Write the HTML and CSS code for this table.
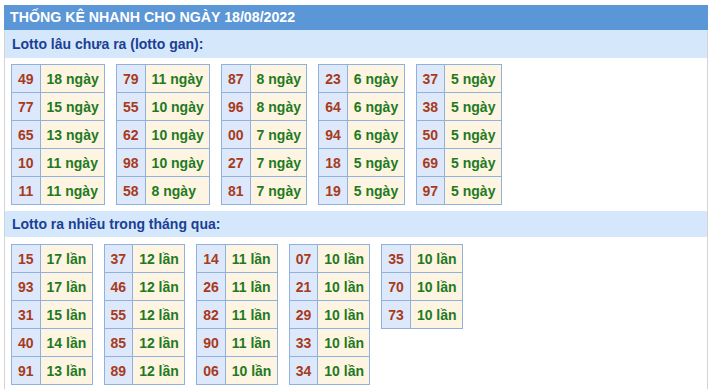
FILE: index.html
```html
<!DOCTYPE html>
<html lang="vi">
<head>
<meta charset="utf-8">
<link rel="stylesheet" href="styles.css">
</head>
<body>
<div class="box">
  <div class="title">THỐNG KÊ NHANH CHO NGÀY 18/08/2022</div>
  <div class="sub">Lotto lâu chưa ra (lotto gan):</div>
  <div class="tables">
    <table class="t"><tr><td class="n">49</td><td class="v">18 ngày</td></tr><tr><td class="n">77</td><td class="v">15 ngày</td></tr><tr><td class="n">65</td><td class="v">13 ngày</td></tr><tr><td class="n">10</td><td class="v">11 ngày</td></tr><tr><td class="n">11</td><td class="v">11 ngày</td></tr></table>
    <table class="t"><tr><td class="n">79</td><td class="v">11 ngày</td></tr><tr><td class="n">55</td><td class="v">10 ngày</td></tr><tr><td class="n">62</td><td class="v">10 ngày</td></tr><tr><td class="n">98</td><td class="v">10 ngày</td></tr><tr><td class="n">58</td><td class="v">8 ngày</td></tr></table>
    <table class="t"><tr><td class="n">87</td><td class="v">8 ngày</td></tr><tr><td class="n">96</td><td class="v">8 ngày</td></tr><tr><td class="n">00</td><td class="v">7 ngày</td></tr><tr><td class="n">27</td><td class="v">7 ngày</td></tr><tr><td class="n">81</td><td class="v">7 ngày</td></tr></table>
    <table class="t"><tr><td class="n">23</td><td class="v">6 ngày</td></tr><tr><td class="n">64</td><td class="v">6 ngày</td></tr><tr><td class="n">94</td><td class="v">6 ngày</td></tr><tr><td class="n">18</td><td class="v">5 ngày</td></tr><tr><td class="n">19</td><td class="v">5 ngày</td></tr></table>
    <table class="t"><tr><td class="n">37</td><td class="v">5 ngày</td></tr><tr><td class="n">38</td><td class="v">5 ngày</td></tr><tr><td class="n">50</td><td class="v">5 ngày</td></tr><tr><td class="n">69</td><td class="v">5 ngày</td></tr><tr><td class="n">97</td><td class="v">5 ngày</td></tr></table>
  </div>
  <div class="sub sub2">Lotto ra nhiều trong tháng qua:</div>
  <div class="tables tables2">
    <table class="t"><tr><td class="n">15</td><td class="v">17 lần</td></tr><tr><td class="n">93</td><td class="v">17 lần</td></tr><tr><td class="n">31</td><td class="v">15 lần</td></tr><tr><td class="n">40</td><td class="v">14 lần</td></tr><tr><td class="n">91</td><td class="v">13 lần</td></tr></table>
    <table class="t"><tr><td class="n">37</td><td class="v">12 lần</td></tr><tr><td class="n">46</td><td class="v">12 lần</td></tr><tr><td class="n">55</td><td class="v">12 lần</td></tr><tr><td class="n">85</td><td class="v">12 lần</td></tr><tr><td class="n">89</td><td class="v">12 lần</td></tr></table>
    <table class="t"><tr><td class="n">14</td><td class="v">11 lần</td></tr><tr><td class="n">26</td><td class="v">11 lần</td></tr><tr><td class="n">82</td><td class="v">11 lần</td></tr><tr><td class="n">90</td><td class="v">11 lần</td></tr><tr><td class="n">06</td><td class="v">10 lần</td></tr></table>
    <table class="t"><tr><td class="n">07</td><td class="v">10 lần</td></tr><tr><td class="n">21</td><td class="v">10 lần</td></tr><tr><td class="n">29</td><td class="v">10 lần</td></tr><tr><td class="n">33</td><td class="v">10 lần</td></tr><tr><td class="n">34</td><td class="v">10 lần</td></tr></table>
    <table class="t"><tr><td class="n">35</td><td class="v">10 lần</td></tr><tr><td class="n">70</td><td class="v">10 lần</td></tr><tr><td class="n">73</td><td class="v">10 lần</td></tr></table>
  </div>
</div>
</body>
</html>
```
FILE: styles.css
```css
html, body {
  margin: 0;
  padding: 0;
  background: #fff;
}
body {
  font-family: "Liberation Sans", Arial, sans-serif;
  padding: 5px 4px 0 4px;
}
.box {
  width: 702px;
  height: 384px;
  border-left: 1px solid #d4d4d8;
  border-right: 1px solid #d4d4d8;
}
.title {
  background: #5b96d6;
  color: #fff;
  font-weight: bold;
  font-size: 14.2px;
  height: 25px;
  line-height: 25px;
  padding-left: 6px;
  margin: 0 -1px;
}
.sub {
  background: #d5e8fb;
  color: #1b3f94;
  font-weight: bold;
  font-size: 14px;
  height: 28px;
  line-height: 28px;
  padding-left: 7px;
}
.sub2 {
  height: 26px;
  line-height: 26px;
}
.tables {
  display: flex;
  align-items: flex-start;
  gap: 11px;
  padding: 6px 0 0 6px;
  margin-bottom: 6px;
}
.tables2 {
  padding-top: 7px;
}
.t {
  border-collapse: collapse;
  font-size: 14px;
  font-weight: bold;
}
.t td {
  border: 1px solid #90b1de;
  height: 28px;
  padding: 0 6px;
  box-sizing: border-box;
  white-space: nowrap;
}
.t .n {
  background: #dde9fa;
  color: #a83a20;
  text-align: center;
}
.t .v {
  background: #fef4e2;
  color: #1f7a1f;
  padding: 0 5.3px 0 6px;
}
```
